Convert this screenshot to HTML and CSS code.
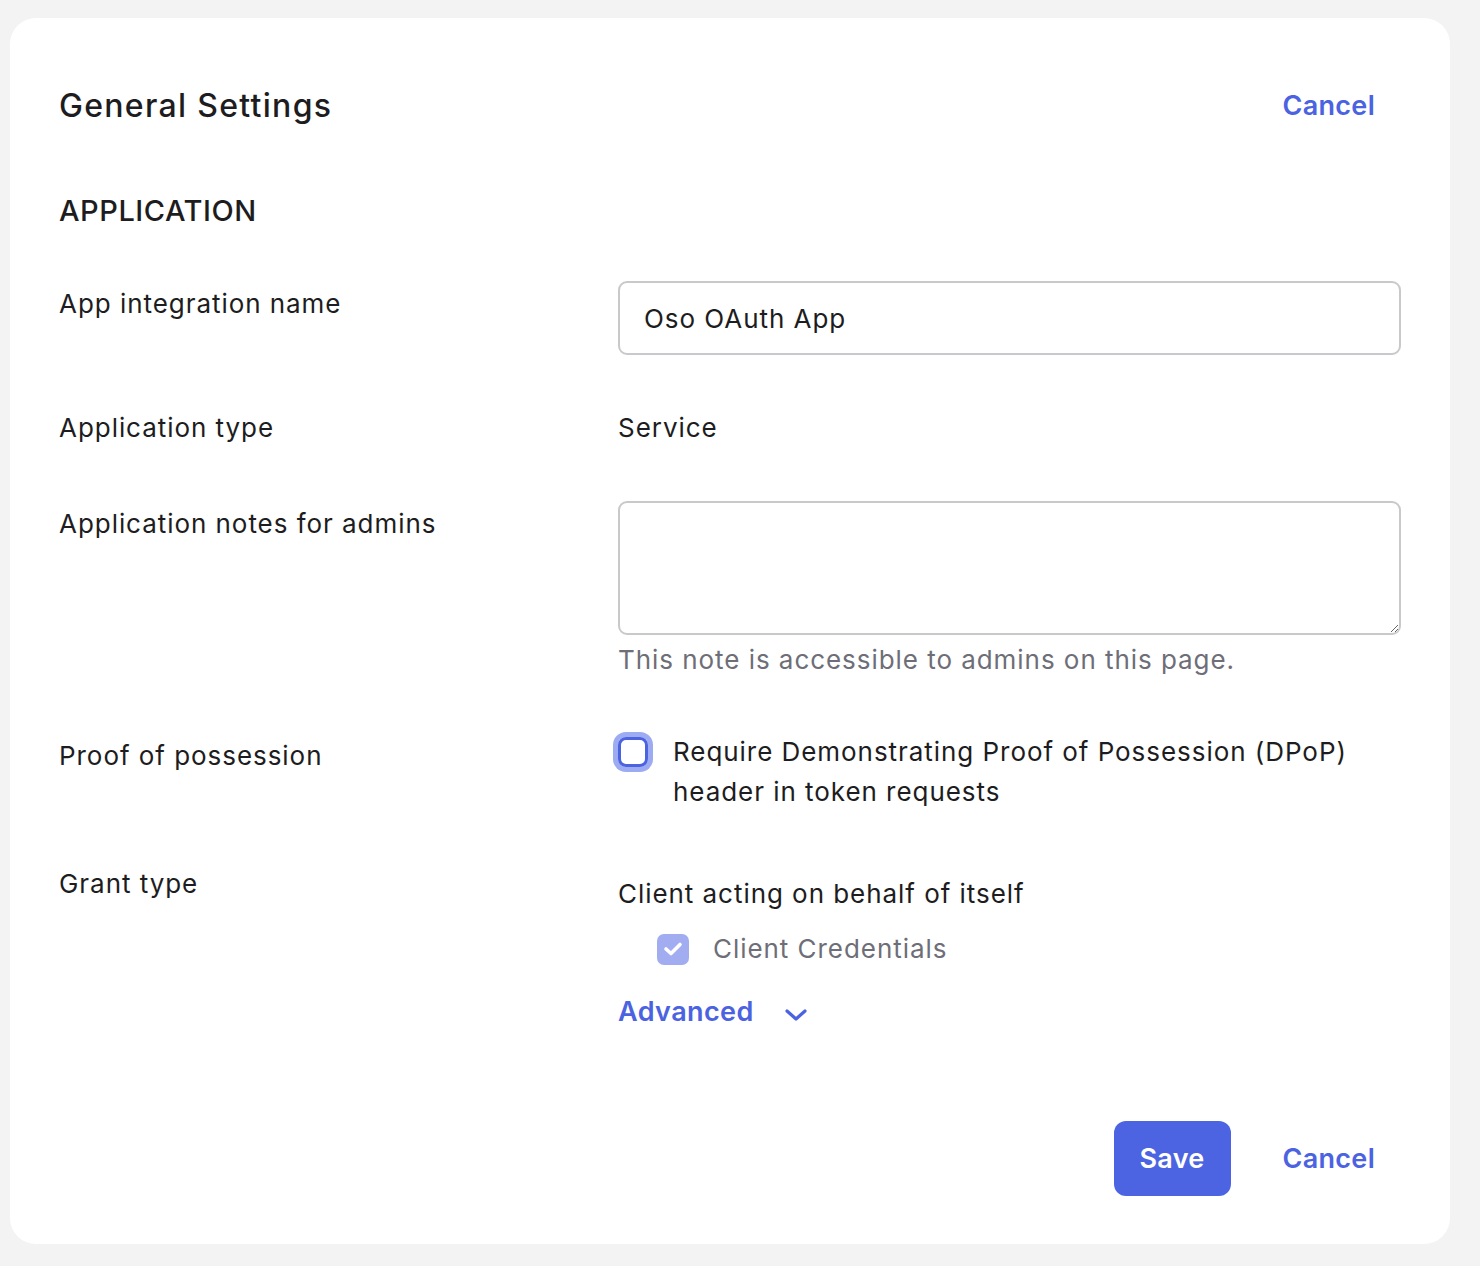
FILE: index.html
```html
<!DOCTYPE html>
<html lang="en">
  <head>
    <meta charset="UTF-8" />
    <title>General Settings</title>
    <link rel="stylesheet" href="styles.css">
  </head>
  <body>
    <div class="settings-card">
      <div class="card-header">
        <h2>General Settings</h2>
        <button class="link-btn">Cancel</button>
      </div>

      <h3 class="section-title">APPLICATION</h3>

      <div class="form-row name-row">
        <label class="row-label">App integration name</label>
        <div class="row-field">
          <input class="text-input" type="text" value="Oso OAuth App" />
        </div>
      </div>

      <div class="form-row type-row">
        <span class="row-label">Application type</span>
        <div class="row-field">
          <span class="value-text">Service</span>
        </div>
      </div>

      <div class="form-row notes-row">
        <label class="row-label">Application notes for admins</label>
        <div class="row-field">
          <textarea class="text-area"></textarea>
          <p class="hint">This note is accessible to admins on this page.</p>
        </div>
      </div>

      <div class="form-row dpop-row">
        <span class="row-label">Proof of possession</span>
        <div class="row-field">
          <label class="check-line">
            <span class="check-box focused"></span>
            <span>Require Demonstrating Proof of Possession (DPoP) header in token requests</span>
          </label>
        </div>
      </div>

      <div class="form-row grant-row">
        <span class="row-label">Grant type</span>
        <div class="row-field">
          <p class="value-text">Client acting on behalf of itself</p>
          <label class="check-line sub">
            <span class="check-box checked">
              <svg width="22" height="16" viewBox="0 0 22 16">
                <path d="M4 8 L9 12.5 L18 3.5" fill="none" stroke="#fff" stroke-width="3.6" stroke-linecap="round" stroke-linejoin="round" />
              </svg>
            </span>
            <span class="muted">Client Credentials</span>
          </label>
          <button class="advanced-btn">
            Advanced
            <svg width="24" height="14" viewBox="0 0 24 14">
              <path d="M3 3 L12 11 L21 3" fill="none" stroke="#4b63e1" stroke-width="3.2" stroke-linecap="round" stroke-linejoin="round" />
            </svg>
          </button>
        </div>
      </div>

      <div class="card-footer">
        <button class="save-btn">Save</button>
        <button class="link-btn">Cancel</button>
      </div>
    </div>
  </body>
</html>
```

FILE: styles.css
```css
* {
  margin: 0;
  padding: 0;
  box-sizing: border-box;
}
body {
  font-family: Inter, "Noto Sans", sans-serif;
  background: #f3f3f3;
  color: #1d1d21;
  letter-spacing: 0.95px;
  padding: 18px 30px 22px 10px;
}
.settings-card {
  background: white;
  border-radius: 26px;
  padding: 49px;
  height: 1226px;
}
.card-header {
  display: flex;
  justify-content: space-between;
  align-items: center;
  height: 76px;
}
h2 {
  font-size: 32px;
  font-weight: 500;
  letter-spacing: 1.3px;
}
button,
input,
textarea {
  font-family: inherit;
  letter-spacing: inherit;
}
button {
  border: none;
  background: transparent;
  cursor: pointer;
}
.link-btn {
  color: #4b63e1;
  font-size: 27px;
  font-weight: 600;
  letter-spacing: 0.3px;
  padding: 0 26px;
  height: 76px;
}
.section-title {
  font-size: 29px;
  font-weight: 500;
  line-height: 36px;
  letter-spacing: 0.55px;
  margin-top: 50px;
}
.form-row {
  display: grid;
  grid-template-columns: 559px 1fr;
}
.row-label {
  font-size: 26px;
  line-height: 36px;
}
.name-row {
  margin-top: 52px;
}
.name-row .row-label,
.notes-row .row-label {
  margin-top: 5px;
}
.type-row {
  margin-top: 55px;
}
.notes-row {
  margin-top: 55px;
}
.text-input,
.text-area {
  width: 100%;
  border: 2px solid #c9c9cc;
  border-radius: 9px;
  font-size: 26px;
  color: #1d1d21;
  padding: 0 24px;
}
.text-input {
  height: 74px;
}
.text-area {
  height: 134px;
  display: block;
  resize: vertical;
}
.value-text {
  font-size: 26px;
  line-height: 36px;
}
.hint {
  font-size: 26px;
  line-height: 36px;
  color: #6e6e78;
  margin-top: 7px;
}
.dpop-row {
  margin-top: 54px;
}
.dpop-row .row-label {
  margin-top: 6px;
}
.check-line {
  display: flex;
  align-items: flex-start;
  gap: 25px;
  font-size: 26px;
  line-height: 40px;
}
.check-box {
  flex: none;
  display: flex;
  align-items: center;
  justify-content: center;
  width: 30px;
  height: 30px;
  border-radius: 8px;
}
.check-box.focused {
  border: 3px solid #4b63e1;
  box-shadow: 0 0 0 5px #9dabf3;
  margin-top: 5px;
}
.check-box.checked {
  width: 32px;
  height: 31px;
  background: #a1acf1;
  border-radius: 7px;
}
.grant-row {
  margin-top: 54px;
}
.grant-row .value-text {
  margin-top: 10px;
}
.check-line.sub {
  margin: 19px 0 0 39px;
  align-items: center;
  gap: 24px;
  line-height: 36px;
}
.muted {
  color: #6e6e78;
}
.advanced-btn {
  display: flex;
  align-items: center;
  gap: 30px;
  color: #4b63e1;
  font-size: 27px;
  font-weight: 600;
  letter-spacing: 0.4px;
  line-height: 36px;
  margin-top: 27px;
}
.advanced-btn svg {
  margin-top: 5px;
}
.card-footer {
  display: flex;
  justify-content: flex-end;
  align-items: center;
  gap: 26px;
  margin-top: 90px;
}
.save-btn {
  background: #4c64e2;
  color: white;
  font-size: 27px;
  font-weight: 600;
  letter-spacing: 0.3px;
  width: 117px;
  height: 75px;
  border-radius: 12px;
}
```
